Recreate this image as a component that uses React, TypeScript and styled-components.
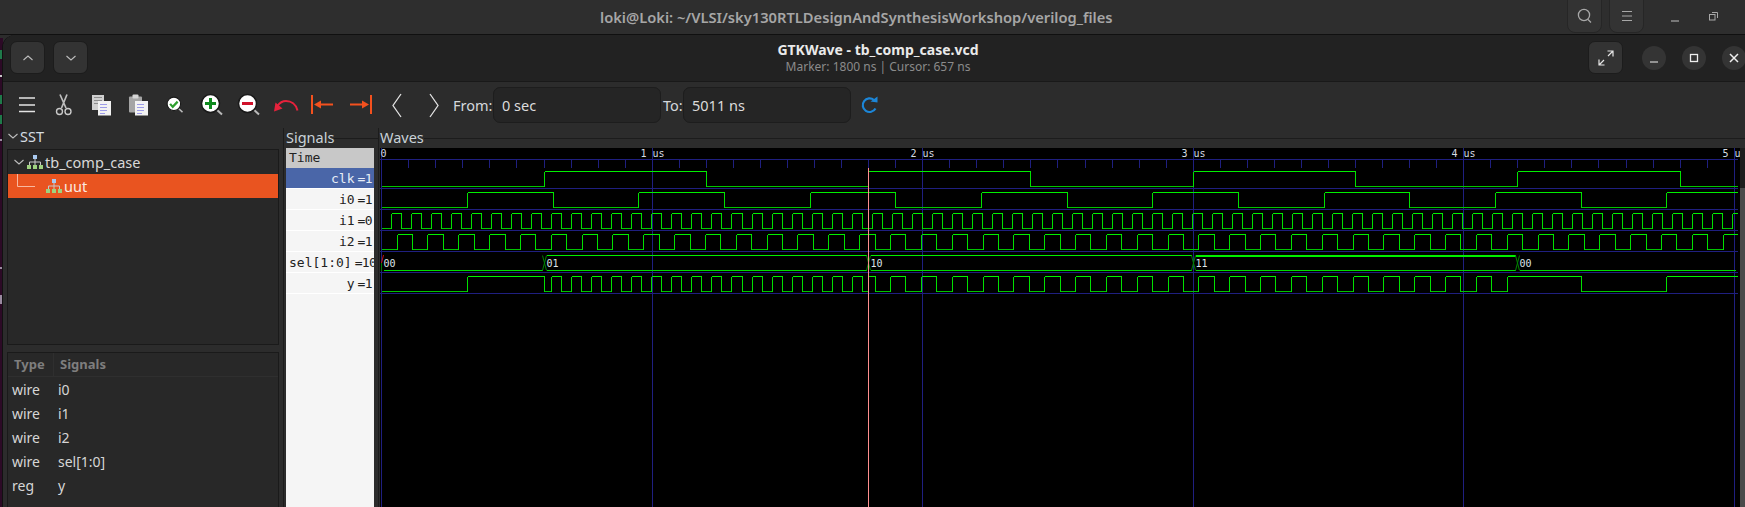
import styled, { createGlobalStyle } from 'styled-components';

const UI = `"Noto Sans", "Open Sans", sans-serif`;
const MONO = `"DejaVu Sans Mono", "Liberation Mono", monospace`;

const GlobalStyle = createGlobalStyle`
  html, body { margin: 0; padding: 0; background: #2c2c2c; }
  * { box-sizing: border-box; }
`;

/* ---------- wave data ---------- */
const END_NS = 5011;
const PANE_W = 1360;
const PANE_H = 359;
const toX = (ns: number) => Math.round(1.2 + ns * 0.2705) + 0.5;

const square = (half: number) => (t: number) => Math.floor(t / half) % 2;
const clk = square(600);
const i0 = square(316.67);
const i1 = square(37);
const i2 = square(57);
const y = (t: number) => (t < 600 ? i0(t) : t < 1800 ? i1(t) : t < 4200 ? i2(t) : i0(t));

const wavePaths = (fn: (t: number) => number, row: number) => {
  const hi = 23.5 + row * 21;
  const lo = hi + 15;
  let high = '';
  let low = '';
  let edges = '';
  let start = 0;
  let level = fn(0);
  for (let t = 1; t <= END_NS; t++) {
    const v = fn(t);
    if (v !== level || t === END_NS) {
      const a = toX(start);
      const b = t === END_NS ? 1358 : toX(t);
      if (level) high += `M${a} ${hi}H${b}`;
      else low += `M${a} ${lo}H${b}`;
      if (t !== END_NS) edges += `M${b} ${hi}V${lo}`;
      start = t;
      level = v;
    }
  }
  return { high, low, edges };
};

const digital = [clk, i0, i1, i2, null, y].map((fn, row) => (fn ? wavePaths(fn, row) : null));

const busSegments = [
  { from: 0, to: 600, label: '00', top: false, thick: false },
  { from: 600, to: 1800, label: '01', top: true, thick: false },
  { from: 1800, to: 3000, label: '10', top: true, thick: false },
  { from: 3000, to: 4200, label: '11', top: true, thick: true },
  { from: 4200, to: END_NS, label: '00', top: false, thick: false },
];

const range = (n: number) => Array.from({ length: n }, (_, i) => i);

/* ---------- shell ---------- */
const Screen = styled.div`
  width: 1745px;
  height: 507px;
  overflow: hidden;
  background: #2c2c2c;
  font-family: ${UI};
  display: flex;
  flex-direction: column;
`;

const TopBar = styled.header`
  flex: none;
  height: 35px;
  display: flex;
  align-items: center;
  background: #2e2e2e;
  border-bottom: 1px solid #101010;
  padding-left: 600px;
`;

const TopTitle = styled.div`
  width: 967px;
  font-size: 14.7px;
  font-weight: 600;
  color: #a6a6a6;
  white-space: nowrap;
`;

const TopActions = styled.div`
  display: flex;
  align-items: center;
  gap: 7px;
`;

const TopButton = styled.div`
  width: 35px;
  height: 34px;
  margin-top: -3px;
  display: flex;
  align-items: center;
  justify-content: center;
  background: #333;
  border: 1px solid #262626;
  border-radius: 0 0 8px 8px;
`;

const TopGhost = styled.div<{ $first?: boolean }>`
  width: 24px;
  margin-left: ${p => (p.$first ? '19px' : '15px')};
  display: flex;
  justify-content: center;
`;

const Desktop = styled.div`
  flex: 1;
  min-height: 0;
  display: flex;
`;

const Wallpaper = styled.svg`
  flex: none;
  display: block;
  width: 3px;
  height: 472px;
`;

const Window = styled.div`
  flex: none;
  width: 1752px;
  display: flex;
  flex-direction: column;
  background: #2c2c2c;
  border-top-left-radius: 13px;
  overflow: hidden;
  box-shadow: -1px 0 0 #111;
`;

const HeaderBar = styled.div`
  flex: none;
  height: 47px;
  padding: 6px 9px 7px 7px;
  display: grid;
  grid-template-columns: 1fr auto 1fr;
  align-items: center;
  background: #222;
  border-bottom: 1px solid #191919;
`;

const HeaderSide = styled.div<{ $end?: boolean }>`
  display: flex;
  align-items: center;
  justify-content: ${p => (p.$end ? 'flex-end' : 'flex-start')};
  gap: ${p => (p.$end ? '16px' : '8px')};
`;

const HeaderButton = styled.div<{ $wide?: boolean }>`
  width: 35px;
  height: 33px;
  margin-right: ${p => (p.$wide ? '3px' : '0')};
  display: flex;
  align-items: center;
  justify-content: center;
  background: #333;
  border: 1px solid #1c1c1c;
  border-radius: 7px;
`;

const RoundButton = styled.div`
  width: 24px;
  height: 24px;
  display: flex;
  align-items: center;
  justify-content: center;
  border-radius: 50%;
  background: #343434;
`;

const TitleBlock = styled.div`
  text-align: center;
`;

const AppTitle = styled.div`
  font-size: 14px;
  line-height: 18px;
  font-weight: 700;
  color: #eaeaea;
`;

const AppSubtitle = styled.div`
  font-size: 12px;
  line-height: 15px;
  color: #8b8b8b;
`;

/* ---------- toolbar ---------- */
const Toolbar = styled.div`
  flex: none;
  height: 46px;
  padding-left: 5px;
  display: flex;
  align-items: center;
  background: #2c2c2c;
`;

const ToolIcon = styled.div`
  flex: none;
  width: 37px;
  height: 36px;
  display: flex;
  align-items: center;
  justify-content: center;
`;

const FieldLabel = styled.span<{ $width: number; $left: number }>`
  flex: none;
  margin-left: ${p => p.$left}px;
  width: ${p => p.$width}px;
  font-size: 14.5px;
  color: #d4d8dc;
`;

const Entry = styled.div`
  flex: none;
  width: 168px;
  height: 36px;
  padding-left: 8px;
  display: flex;
  align-items: center;
  font-size: 14.5px;
  color: #dcdcdc;
  background: #252525;
  border: 1px solid #1d1d1d;
  border-radius: 7px;
`;

const RefreshIcon = styled.div`
  margin-left: 8px;
  width: 22px;
  display: flex;
  justify-content: center;
`;

/* ---------- panes ---------- */
const Panes = styled.div`
  flex: 1;
  min-height: 0;
  display: flex;
`;

const LeftColumn = styled.div`
  flex: none;
  width: 276px;
  padding-left: 4px;
  display: flex;
  flex-direction: column;
`;

const Expander = styled.div`
  flex: none;
  height: 21px;
  padding-bottom: 5px;
  display: flex;
  align-items: center;
  gap: 1px;
  font-size: 14.5px;
  color: #d4dce2;
`;

const Box = styled.div`
  background: #282828;
  border: 1px solid #1a1a1a;
`;

const TreeBox = styled(Box)`
  flex: none;
  height: 196px;
  margin-bottom: 7px;
`;

const TreeRow = styled.div<{ $selected?: boolean }>`
  height: 24px;
  display: flex;
  align-items: center;
  gap: 2px;
  padding-left: ${p => (p.$selected ? '2px' : '5px')};
  font-size: 14.5px;
  color: ${p => (p.$selected ? '#fbe9e0' : '#d8d8d8')};
  background: ${p => (p.$selected ? '#e95420' : 'transparent')};
`;

const ListBox = styled(Box)`
  flex: 1;
  border-bottom: 0;
`;

const ListHead = styled.div`
  height: 24px;
  display: grid;
  grid-template-columns: 46px 1fr;
  border-bottom: 1px solid #2f2f2f;
  font-size: 13px;
  font-weight: 700;
  color: #7e7e7e;
`;

const ListHeadCell = styled.div`
  padding-left: 6px;
  line-height: 23px;
  border-right: 1px solid #2f2f2f;
  &:last-child { border-right: 0; }
`;

const ListRow = styled.div`
  height: 24px;
  display: grid;
  grid-template-columns: 46px 1fr;
  align-items: center;
  padding-left: 4px;
  font-size: 14px;
  color: #d6d6d6;
`;

const FrameHead = styled.div`
  flex: none;
  height: 20px;
  padding-bottom: 3px;
  display: flex;
  align-items: center;
  font-size: 14.5px;
  color: #c9d2d8;
`;

const FrameRule = styled.div`
  flex: 1;
  height: 1px;
  margin-top: 4px;
  background: #1c1c1c;
`;

const SignalsPane = styled.div`
  flex: none;
  width: 95px;
  margin-left: 4px;
  padding-left: 2px;
  display: flex;
  flex-direction: column;
  border-left: 1px solid #1c1c1c;
`;

const SignalList = styled.div`
  flex: 1;
  width: 88px;
  overflow: hidden;
  background: #f5f5f5;
  font-family: ${MONO};
  font-size: 13px;
  color: #222;
`;

const TimeRow = styled.div`
  height: 20px;
  line-height: 20px;
  padding-left: 3px;
  background: #c8c8c8;
`;

const SignalRow = styled.div<{ $selected?: boolean; $clip?: boolean }>`
  height: 21px;
  display: flex;
  align-items: center;
  justify-content: ${p => (p.$clip ? 'flex-start' : 'flex-end')};
  gap: 3px;
  padding: 0 2px 0 3px;
  white-space: nowrap;
  color: ${p => (p.$selected ? '#e6edf7' : '#222')};
  background: ${p => (p.$selected ? '#4a66a8' : 'transparent')};
  border-bottom: 1px solid #fff;
`;

const SignalValue = styled.span`
  letter-spacing: -0.6px;
`;

const WavesPane = styled.div`
  flex: none;
  width: 1367px;
  display: flex;
  flex-direction: column;
  border-left: 1px solid #1c1c1c;
  padding-left: 1px;
`;

const WaveBody = styled.div`
  flex: 1;
  display: flex;
  min-height: 0;
`;

const WaveCanvas = styled.svg`
  flex: none;
  display: block;
  background: #000;
`;

const WaveScroll = styled.div`
  width: 5px;
  background: linear-gradient(#1d1d1d 0 40px, #4a4a4a 40px);
`;

const TimeText = styled.text`
  font-family: ${MONO};
  font-size: 10px;
  fill: #d6dde4;
  text-anchor: middle;
`;

const BusText = styled.text`
  font-family: ${MONO};
  font-size: 10px;
  fill: #dfe6ea;
`;

/* ---------- icons ---------- */
const Chevron = ({ dir = 'down', size = 12, color = '#bdbdbd' }: { dir?: 'up' | 'down'; size?: number; color?: string }) => (
  <svg width={size} height={size} viewBox="0 0 12 12" fill="none" stroke={color} strokeWidth="1.1">
    <path d={dir === 'up' ? 'M1.5 8 6 4l4.5 4' : 'M1.5 4 6 8l4.5-4'} />
  </svg>
);

const Hierarchy = () => (
  <svg width="16" height="14" viewBox="0 0 16 14">
    <rect x="6" y="0" width="4" height="4" fill="#a9c9f0" />
    <path d="M8 4v3M2.5 10V7h11v3M8 7v3" stroke="#c8c8c8" strokeWidth="1" fill="none" />
    <rect x="0" y="10" width="4" height="4" fill="#9fd27f" />
    <rect x="6" y="10" width="4" height="4" fill="#9fd27f" />
    <rect x="12" y="10" width="4" height="4" fill="#9fd27f" />
  </svg>
);

const Hamburger = () => (
  <svg width="24" height="24" viewBox="0 0 24 24" stroke="#e4e4e4" strokeWidth="1.5">
    <path d="M4 5h16M4 12h16M4 18.5h16" />
  </svg>
);

const Scissors = () => (
  <svg width="24" height="24" viewBox="0 0 24 24" fill="none" strokeWidth="1.4">
    <path d="M8 1.5 14 15M15 1.5 9.5 15" stroke="#bdbdbd" strokeWidth="1.7" />
    <circle cx="7.5" cy="18.5" r="3" stroke="#c9c9c9" />
    <circle cx="16" cy="18.5" r="3" stroke="#c9c9c9" />
  </svg>
);

const PageLines = ({ x, y: top }: { x: number; y: number }) => (
  <path d={`M${x} ${top}h7M${x} ${top + 3}h7M${x} ${top + 6}h7M${x} ${top + 9}h5`} stroke="#9d9ce8" strokeWidth="1" />
);

const CopyIcon = () => (
  <svg width="24" height="24" viewBox="0 0 24 24">
    <rect x="3" y="2" width="12" height="15" fill="#d0d0d0" />
    <path d="M5 4.500h8M5 7.500h8M5 10.500h8" stroke="#8d8d8d" strokeWidth="1" />
    <rect x="9" y="8" width="13" height="14.500" fill="#f2f2f2" />
    <PageLines x={11} y={11.5} />
  </svg>
);

const PasteIcon = () => (
  <svg width="24" height="24" viewBox="0 0 24 24">
    <rect x="3" y="3.500" width="13" height="16" rx="1" fill="#a5a5a5" />
    <rect x="6.500" y="1.500" width="6" height="4" rx="1" fill="#d6d6d6" />
    <rect x="9" y="8" width="13" height="14.500" fill="#f2f2f2" />
    <PageLines x={11} y={11.5} />
  </svg>
);

const Lens = ({ size, children }: { size: number; children?: React.ReactNode }) => (
  <svg width={size} height={size} viewBox="0 0 24 24">
    <path d="M16 16l6 5.500" stroke="#b9b9b9" strokeWidth="2" />
    <circle cx="10.500" cy="10.500" r="9" fill="#fff" stroke="#1a1a1a" strokeWidth="1.500" />
    {children}
  </svg>
);

const ZoomFit = () => (
  <Lens size={18}>
    <path d="M5.500 10.500 9 14.500l6.500-7" fill="none" stroke="#2f9e2f" strokeWidth="3" />
  </Lens>
);

const ZoomIn = () => (
  <Lens size={24}>
    <path d="M10.500 5v11M5 10.500h11" stroke="#0f8a1f" strokeWidth="3" />
  </Lens>
);

const ZoomOut = () => (
  <Lens size={24}>
    <path d="M5 10.500h11" stroke="#d0112b" strokeWidth="3" />
  </Lens>
);

const UndoIcon = () => (
  <svg width="26" height="24" viewBox="0 0 26 24" fill="none">
    <path d="M24.500 17.500C23 11 18 8 13 8 9 8 6.500 10 4.500 13" stroke="#e6223c" strokeWidth="2" />
    <path d="M1 18.500 2.500 9.500 9.500 15.500z" fill="#e6223c" />
  </svg>
);

const ToLeft = () => (
  <svg width="24" height="20" viewBox="0 0 24 20" fill="#f4511e">
    <rect x="0" y="0" width="2" height="19" />
    <rect x="8" y="8.500" width="14" height="2" />
    <path d="M3 9.500 10 5.500v8z" />
  </svg>
);

const ToRight = () => (
  <svg width="24" height="20" viewBox="0 0 24 20" fill="#f4511e">
    <rect x="22" y="0" width="2" height="19" />
    <rect x="2" y="8.500" width="14" height="2" />
    <path d="M21 9.500 14 5.500v8z" />
  </svg>
);

const PageArrow = ({ right }: { right?: boolean }) => (
  <svg width="12" height="25" viewBox="0 0 12 25" fill="none" stroke="#e2e2e2" strokeWidth="1.300">
    <path d={right ? 'M2 1l8 11.500L2 24' : 'M10 1 2 12.500 10 24'} />
  </svg>
);

const Refresh = () => (
  <svg width="18" height="18" viewBox="0 0 18 18" fill="none">
    <path d="M14.500 12.500A6.800 6.800 0 1 1 13 4" stroke="#1c86d8" strokeWidth="2.200" />
    <path d="M9.500 5.500 16.500 6.500V0.500z" fill="#1c86d8" />
  </svg>
);

const ExpandIcon = () => (
  <svg width="16" height="16" viewBox="0 0 16 16" fill="none" stroke="#e6e6e6" strokeWidth="1.200">
    <path d="M9.500 1h5.500v5.500M15 1l-5 5M6.500 15H1V9.500M1 15l5-5" />
  </svg>
);

const WinMin = ({ color = '#eee', w = 8 }: { color?: string; w?: number }) => (
  <svg width="16" height="16" viewBox="0 0 16 16" stroke={color} strokeWidth="1.200">
    <path d={`M${8 - w / 2} 12h${w}`} />
  </svg>
);

const WinMax = () => (
  <svg width="16" height="16" viewBox="0 0 16 16" fill="none" stroke="#eee" strokeWidth="1.300">
    <rect x="4.500" y="4.500" width="7" height="7" />
  </svg>
);

const WinClose = () => (
  <svg width="16" height="16" viewBox="0 0 16 16" fill="none" stroke="#eee" strokeWidth="1.500">
    <path d="M4 4l8 8M12 4l-8 8" />
  </svg>
);

const SearchIcon = () => (
  <svg width="18" height="18" viewBox="0 0 18 18" fill="none" stroke="#a8a8a8" strokeWidth="1.300">
    <circle cx="8" cy="8" r="5.600" />
    <path d="M12 12.500l3 3" />
  </svg>
);

const MenuIcon = () => (
  <svg width="14" height="14" viewBox="0 0 14 14" stroke="#a8a8a8" strokeWidth="1">
    <path d="M2 2.500h10M2 7h10M2 11.500h10" />
  </svg>
);

const RestoreIcon = () => (
  <svg width="12" height="12" viewBox="0 0 12 12" fill="none" stroke="#a8a8a8" strokeWidth="1">
    <rect x="1.500" y="3.500" width="5.500" height="5.500" />
    <path d="M4 1.500h5.500V7" />
  </svg>
);

const TreeGuide = () => (
  <svg width="34" height="24" viewBox="0 0 34 24" fill="none" stroke="#f8b89f" strokeWidth="1">
    <path d="M7.500 0v12.500H25" />
  </svg>
);

/* ---------- waveform ---------- */
const GRID = '#1f1f80';

const WaveView = () => (
  <WaveCanvas width={PANE_W} height={PANE_H} viewBox={`0 0 ${PANE_W} ${PANE_H}`}>
    <g shapeRendering="crispEdges" strokeWidth="1" fill="none">
      <path
        stroke={GRID}
        d={`M1.500 0V${PANE_H}${range(5)
          .map(i => `M${toX((i + 1) * 1000)} 0V${PANE_H}`)
          .join('')}`}
      />
      <path
        stroke={GRID}
        d={range(7)
          .map(i => `M0 ${i === 0 ? 11.5 : 19.5 + i * 21 + 0}H1358`)
          .join('')}
      />
      <path
        stroke={GRID}
        d={range(50)
          .map(i => `M${toX((i + 1) * 100)} 11.500V20`)
          .join('')}
      />
      {digital.map(
        (w, row) =>
          w && (
            <g key={row}>
              <path d={w.low} stroke="#00c400" />
              <path d={w.edges} stroke="#00e000" />
              <path d={w.high} stroke="#00f000" />
            </g>
          ),
      )}
      {busSegments.map(s => {
        const a = toX(s.from) + 2;
        const b = s.to === END_NS ? 1356 : toX(s.to) - 2;
        return (
          <g key={s.from}>
            <path d={`M${a} 122.500H${b}`} stroke="#00e000" />
            {s.top && <path d={`M${a} ${s.thick ? 108 : 107.500}H${b}`} stroke="#00f000" strokeWidth={s.thick ? 2 : 1} />}
          </g>
        );
      })}
    </g>
    <g fill="none" strokeWidth="1">
      <path d="M3.500 107 1.500 115" stroke="#d01010" />
      <path d="M1.500 115V123" stroke="#007a00" />
      {[600, 1800, 3000, 4200].map(ns => (
        <path key={ns} d={`M${toX(ns) - 2} 122.500L${toX(ns) + 2} 107.500M${toX(ns) - 2} 107.500L${toX(ns) + 2} 122.500`} stroke="#008400" />
      ))}
    </g>
    <path d={`M${toX(1800)} 20V${PANE_H}`} stroke="#ff8f8f" strokeWidth="1" shapeRendering="crispEdges" />
    <TimeText x={toX(0) + 2} y={9}>0</TimeText>
    {range(5).map(i => (
      <TimeText key={i} x={toX((i + 1) * 1000)} y={9}>
        {i + 1} us
      </TimeText>
    ))}
    {busSegments.map(s => (
      <BusText key={s.from} x={toX(s.from) + 2} y={119}>
        {s.label}
      </BusText>
    ))}
  </WaveCanvas>
);

/* ---------- page ---------- */
const signals = [
  { name: 'i0', value: '=1' },
  { name: 'i1', value: '=0' },
  { name: 'i2', value: '=1' },
];

const declared = [
  ['wire', 'i0'],
  ['wire', 'i1'],
  ['wire', 'i2'],
  ['wire', 'sel[1:0]'],
  ['reg', 'y'],
];

const App = () => (
  <Screen>
    <GlobalStyle />
    <TopBar>
      <TopTitle>loki@Loki: ~/VLSI/sky130RTLDesignAndSynthesisWorkshop/verilog_files</TopTitle>
      <TopActions>
        <TopButton><SearchIcon /></TopButton>
        <TopButton><MenuIcon /></TopButton>
      </TopActions>
      <TopGhost $first><WinMin color="#a8a8a8" /></TopGhost>
      <TopGhost><RestoreIcon /></TopGhost>
    </TopBar>
    <Desktop>
      <Wallpaper viewBox="0 0 3 472">
        <rect width="3" height="472" y="3" fill="#2c0a26" />
        <rect y="15" width="3" height="9" fill="#1f7a4a" />
        <rect y="40" width="3" height="2" fill="#c8c8c8" />
        <rect y="60" width="3" height="9" fill="#1f7a4a" />
        <rect y="80" width="3" height="9" fill="#1f7a4a" />
        <rect y="104" width="3" height="2" fill="#9a8aa0" />
        <rect y="232" width="3" height="2" fill="#9a8aa0" />
        <rect y="260" width="3" height="9" fill="#9a8aa0" />
      </Wallpaper>
      <Window>
        <HeaderBar>
          <HeaderSide>
            <HeaderButton><Chevron dir="up" /></HeaderButton>
            <HeaderButton><Chevron /></HeaderButton>
          </HeaderSide>
          <TitleBlock>
            <AppTitle>GTKWave - tb_comp_case.vcd</AppTitle>
            <AppSubtitle>Marker: 1800 ns  |  Cursor: 657 ns</AppSubtitle>
          </TitleBlock>
          <HeaderSide $end>
            <HeaderButton $wide><ExpandIcon /></HeaderButton>
            <RoundButton><WinMin /></RoundButton>
            <RoundButton><WinMax /></RoundButton>
            <RoundButton><WinClose /></RoundButton>
          </HeaderSide>
        </HeaderBar>
        <Toolbar>
          <ToolIcon><Hamburger /></ToolIcon>
          <ToolIcon><Scissors /></ToolIcon>
          <ToolIcon><CopyIcon /></ToolIcon>
          <ToolIcon><PasteIcon /></ToolIcon>
          <ToolIcon><ZoomFit /></ToolIcon>
          <ToolIcon><ZoomIn /></ToolIcon>
          <ToolIcon><ZoomOut /></ToolIcon>
          <ToolIcon><UndoIcon /></ToolIcon>
          <ToolIcon><ToLeft /></ToolIcon>
          <ToolIcon><ToRight /></ToolIcon>
          <ToolIcon><PageArrow /></ToolIcon>
          <ToolIcon><PageArrow right /></ToolIcon>
          <FieldLabel $left={1} $width={40}>From:</FieldLabel>
          <Entry>0 sec</Entry>
          <FieldLabel $left={2} $width={20}>To:</FieldLabel>
          <Entry>5011 ns</Entry>
          <RefreshIcon><Refresh /></RefreshIcon>
        </Toolbar>
        <Panes>
          <LeftColumn>
            <Expander><Chevron />SST</Expander>
            <TreeBox>
              <TreeRow><Chevron /><Hierarchy />tb_comp_case</TreeRow>
              <TreeRow $selected><TreeGuide /><Hierarchy />uut</TreeRow>
            </TreeBox>
            <ListBox>
              <ListHead>
                <ListHeadCell>Type</ListHeadCell>
                <ListHeadCell>Signals</ListHeadCell>
              </ListHead>
              {declared.map(([type, name]) => (
                <ListRow key={name}>
                  <span>{type}</span>
                  <span>{name}</span>
                </ListRow>
              ))}
            </ListBox>
          </LeftColumn>
          <SignalsPane>
            <FrameHead>Signals<FrameRule /></FrameHead>
            <SignalList>
              <TimeRow>Time</TimeRow>
              <SignalRow $selected>clk<SignalValue>=1</SignalValue></SignalRow>
              {signals.map(s => (
                <SignalRow key={s.name}>{s.name}<SignalValue>{s.value}</SignalValue></SignalRow>
              ))}
              <SignalRow $clip>sel[1:0]<SignalValue>=10</SignalValue></SignalRow>
              <SignalRow>y<SignalValue>=1</SignalValue></SignalRow>
            </SignalList>
          </SignalsPane>
          <WavesPane>
            <FrameHead>Waves<FrameRule /></FrameHead>
            <WaveBody>
              <WaveView />
              <WaveScroll />
            </WaveBody>
          </WavesPane>
        </Panes>
      </Window>
    </Desktop>
  </Screen>
);

export default App;
